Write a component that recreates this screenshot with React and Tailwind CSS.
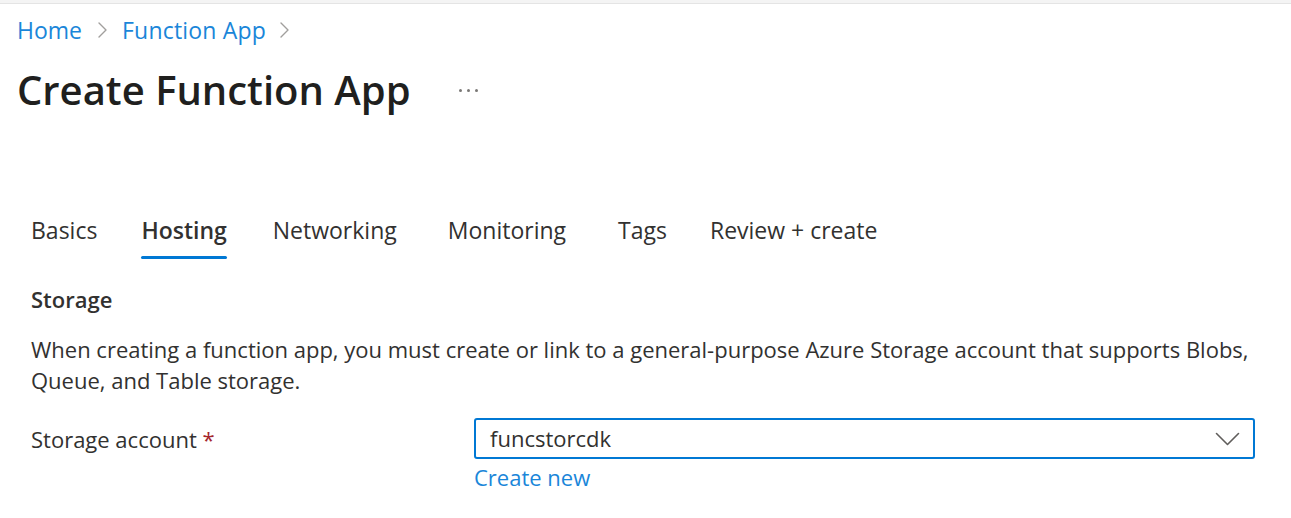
const tabs = [
  { label: 'Basics', ml: 'ml-0' },
  { label: 'Hosting', ml: 'ml-[44px]', active: true },
  { label: 'Networking', ml: 'ml-[46px]' },
  { label: 'Monitoring', ml: 'ml-[51px]' },
  { label: 'Tags', ml: 'ml-[52px]' },
  { label: 'Review + create', ml: 'ml-[43px]' },
];

function Chevron({ className }) {
  return (
    <svg className={className} width="9" height="16" viewBox="0 0 9 16" fill="none">
      <path d="M1 1l7 7-7 7" stroke="currentColor" strokeWidth="1.4" strokeLinecap="round" strokeLinejoin="round" />
    </svg>
  );
}

function App() {
  return (
    <div className="min-h-[518px] w-[1291px] bg-white text-[#323130] font-['Open_Sans',sans-serif]">
      <div className="h-[4px] border-b border-[#e4e4e4] bg-[#f4f4f4]" />

      {/* Breadcrumb + title */}
      <div className="pl-[17px]">
        <nav className="mt-[11px] flex items-center text-[23px] leading-[30px] text-[#1a86d9]">
          <span>Home</span>
          <Chevron className="ml-[16px] mr-[15px] text-[#a19f9d]" />
          <span className="tracking-[0.2px]">Function App</span>
          <Chevron className="ml-[14px] text-[#a19f9d]" />
        </nav>
        <div className="mt-[19px] flex items-center">
          <h1 className="text-[40px] font-semibold leading-[52px] text-[#201f1e]">Create Function App</h1>
          <div className="ml-[48px] mt-[1px] flex gap-[5px]">
            <span className="h-[3px] w-[3px] rounded-full bg-[#7a7876]" />
            <span className="h-[3px] w-[3px] rounded-full bg-[#7a7876]" />
            <span className="h-[3px] w-[3px] rounded-full bg-[#7a7876]" />
          </div>
        </div>
      </div>

      {/* Tabs */}
      <div className="mt-[99px] pl-[31px]">
        <div className="flex text-[23px] leading-[30px]">
          {tabs.map((t) => (
            <div key={t.label} className={'flex flex-col ' + t.ml}>
              <span className={t.active ? 'font-semibold text-[#323130]' : 'text-[#323130]'}>{t.label}</span>
              <div className={'mt-[11px] h-[3px] rounded-full ' + (t.active ? 'bg-[#0078d4]' : 'bg-transparent')} />
            </div>
          ))}
        </div>

        {/* Storage section */}
        <h2 className="mt-[25px] text-[22px] font-semibold leading-[30px]">Storage</h2>
        <p className="mt-[20px] pr-[30px] text-[22px] leading-[31px]">
          When creating a function app, you must create or link to a general-purpose Azure Storage account that supports Blobs, Queue, and Table storage.
        </p>

        <div className="mt-[22px] flex items-start">
          <label className="w-[443px] pt-[6px] text-[22px] leading-[30px]">
            Storage account <span className="text-[#a4262c]">*</span>
          </label>
          <div className="w-[781px]">
            <div className="flex h-[41px] items-center justify-between rounded-[3px] border-2 border-[#0078d4] pl-[14px] pr-[13px] text-[22px]">
              <span>funcstorcdk</span>
              <svg width="25" height="14" viewBox="0 0 25 14" fill="none" className="text-[#605e5c]">
                <path d="M1.5 1.5l11 11 11-11" stroke="currentColor" strokeWidth="1.6" strokeLinecap="round" strokeLinejoin="round" />
              </svg>
            </div>
            <a className="mt-[3px] block text-[22px] leading-[30px] text-[#1a86d9]">Create new</a>
          </div>
        </div>
      </div>
    </div>
  );
}

export default App;
